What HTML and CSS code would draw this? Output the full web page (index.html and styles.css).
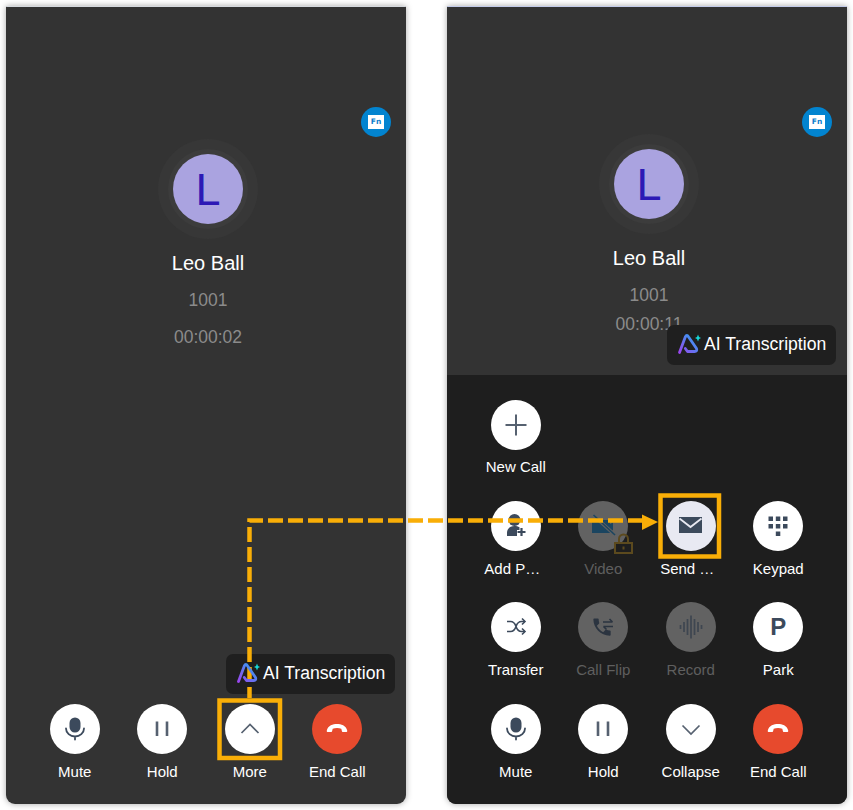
FILE: index.html
```html
<!DOCTYPE html>
<html lang="en">
<head>
<meta charset="utf-8">
<title>Call screen</title>
<link rel="stylesheet" href="styles.css">
</head>
<body>
<svg width="0" height="0" class="defs">
  <defs>
    <linearGradient id="ai-grad" x1="0" y1="1" x2="1" y2="0">
      <stop offset="0" stop-color="#9a46ee"/>
      <stop offset="1" stop-color="#2aa6f2"/>
    </linearGradient>
    <symbol id="i-mic" viewBox="0 0 50 50">
      <rect x="19.500" y="13.500" width="11" height="15" rx="5.500" fill="currentColor"/>
      <path d="M16 24.500a9 8 0 0 0 18 0M25 32.500v3" fill="none" stroke="currentColor" stroke-width="1.800" stroke-linecap="round"/>
    </symbol>
    <symbol id="i-pause" viewBox="0 0 50 50">
      <path d="M20 17.500v14.500M30 17.500v14.500" fill="none" stroke="#566170" stroke-width="2.600"/>
    </symbol>
    <symbol id="i-end" viewBox="0 0 50 50">
      <path d="M16 28c-.8 0-1.500-.7-1.200-1.600C16 21.500 21 20 25 20s9 1.500 10.200 6.400c.3.900-.4 1.600-1.200 1.600h-3c-.8 0-1-.6-1.200-1.300l-.5-1.900c-2.500-1-6-1-8.600 0l-.5 1.900c-.2.700-.4 1.300-1.200 1.300z" fill="currentColor"/>
    </symbol>
    <symbol id="i-ai" viewBox="0 0 24 22">
      <path d="M2.500 19.500L8.300 4Q9.800 1 11.600 4L19.500 15.500Q20.500 18.500 17.500 18.500H10.500L8.300 15.500" fill="none" stroke="url(#ai-grad)" stroke-width="2.800" stroke-linecap="round" stroke-linejoin="round"/>
      <path d="M21 1.500l1 2.500 2 1-2 1-1 2.500-1-2.500-2-1 2-1z" fill="#16d8d8"/>
    </symbol>
  </defs>
</svg>

<main class="stage">
  <section class="panel panel-collapsed">
    <div class="info info-collapsed">
      <div class="rings"><div class="ring-inner"><div class="avatar">L</div></div></div>
      <div class="name">Leo Ball</div>
      <div class="meta">1001</div>
      <div class="meta">00:00:02</div>
    </div>
    <div class="badge"><span class="badge-card">Fn</span></div>
    <div class="ai-tip ai-tip-low">
      <svg class="ai-icon"><use href="#i-ai"/></svg>
      <span>AI Transcription</span>
    </div>
    <div class="tiles">
      <div class="tile"><span class="circle"><svg class="icon"><use href="#i-mic"/></svg></span><span class="label">Mute</span></div>
      <div class="tile"><span class="circle"><svg class="icon"><use href="#i-pause"/></svg></span><span class="label">Hold</span></div>
      <div class="tile"><span class="circle"><svg class="icon" viewBox="0 0 50 50"><path d="M16.500 29L25 20.500 33.500 29" fill="none" stroke="#566170" stroke-width="1.700"/></svg></span><span class="label">More</span></div>
      <div class="tile"><span class="circle circle-end"><svg class="icon"><use href="#i-end"/></svg></span><span class="label">End Call</span></div>
    </div>
  </section>

  <section class="panel panel-expanded">
    <div class="info info-expanded">
      <div class="rings"><div class="ring-inner"><div class="avatar">L</div></div></div>
      <div class="name">Leo Ball</div>
      <div class="meta">1001</div>
      <div class="meta meta-tight">00:00:11</div>
    </div>
    <div class="badge"><span class="badge-card">Fn</span></div>
    <div class="ai-tip ai-tip-high">
      <svg class="ai-icon"><use href="#i-ai"/></svg>
      <span>AI Transcription</span>
    </div>
    <div class="tiles tiles-dark">
      <div class="tile tile-tight"><span class="circle"><svg class="icon" viewBox="0 0 50 50"><path d="M14.500 25h21M25 14.500v21" fill="none" stroke="#566170" stroke-width="2"/></svg></span><span class="label">New Call</span></div>
      <div class="tile row-start"><span class="circle"><svg class="icon" viewBox="0 0 50 50"><circle cx="23.500" cy="19" r="6" fill="currentColor"/><path d="M16 35v-3.500c0-4 3.500-6.500 7.500-6.500 2 0 3.500.4 5 1.300V29h-2.500v6z" fill="currentColor"/><path d="M30.500 27v8M26.500 31h8" fill="none" stroke="currentColor" stroke-width="2.200"/></svg></span><span class="label label-cut">Add P…</span></div>
      <div class="tile"><span class="circle circle-off"><svg class="icon" viewBox="0 0 50 50"><path d="M14 19h17l1 1v3l3-1.500v8L32 29v3H14z" fill="#1b4560"/><path d="M15 14l22 20" stroke="#626262" stroke-width="3.500"/><path d="M15.500 14l21.500 20" stroke="#1b4560" stroke-width="1.600"/></svg><svg class="lock" viewBox="0 0 19 21"><path d="M5 10V6a4.500 4.500 0 0 1 9 0v4" fill="none" stroke="#5c4a1e" stroke-width="2"/><rect x="1" y="10" width="17" height="10" fill="#1e1e1e" stroke="#5c4a1e" stroke-width="2"/><rect x="8.500" y="13.500" width="2" height="3" fill="#5c4a1e"/></svg></span><span class="label label-off">Video</span></div>
      <div class="tile"><span class="circle circle-active"><svg class="icon" viewBox="0 0 50 50"><path d="M13 16h23v16H13z" fill="currentColor"/><path d="M13.500 17.500L24.500 26l11-8.500" fill="none" stroke="#e8e9f2" stroke-width="1.800"/></svg></span><span class="label label-cut">Send …</span></div>
      <div class="tile"><span class="circle"><svg class="icon" viewBox="0 0 50 50"><path d="M15.500 15.500h4.500V20h-4.500zM22.800 15.500h4.500V20h-4.500zM30 15.500h4.500V20H30zM15.500 23h4.500v4.500h-4.500zM22.800 23h4.500v4.500h-4.500zM30 23h4.500v4.500H30zM22.800 30.500h4.500V35h-4.500z" fill="currentColor"/></svg></span><span class="label">Keypad</span></div>

      <div class="tile"><span class="circle"><svg class="icon" viewBox="0 0 50 50"><path d="M16 19.500h3.500c3.500 0 4.500 2 5.500 5s2 5 5.500 5H34M16 29.500h3.500c3.500 0 4.500-2 5.500-5s2-5 5.500-5H34" fill="none" stroke="currentColor" stroke-width="1.600"/><path d="M31 16.500l3 3-3 3M31 26.500l3 3-3 3" fill="none" stroke="currentColor" stroke-width="1.600"/></svg></span><span class="label">Transfer</span></div>
      <div class="tile"><span class="circle circle-off"><svg class="icon" viewBox="0 0 50 50"><g transform="translate(12.500 13.500) scale(.96)"><path d="M6.620 10.790c1.440 2.830 3.760 5.140 6.590 6.590l2.200-2.200c.27-.27.67-.36 1.020-.24 1.120.37 2.330.57 3.570.57.55 0 1 .45 1 1V20c0 .55-.45 1-1 1-9.390 0-17-7.610-17-17 0-.55.45-1 1-1h3.500c.55 0 1 .45 1 1 0 1.250.2 2.450.57 3.570.11.35.03.74-.25 1.020l-2.200 2.200z" fill="#2b3440"/></g><path d="M25 20h9.500M31.500 17l3 3M35 24.500h-9.500M28.500 27.500l-3-3" fill="none" stroke="#2b3440" stroke-width="1.600"/></svg></span><span class="label label-off">Call Flip</span></div>
      <div class="tile"><span class="circle circle-off"><svg class="icon" viewBox="0 0 50 50"><path d="M14.500 23v4M18 20v10M21.500 17v16M25 13.500v23M28.500 17v16M32 20v10M35.500 23v4" fill="none" stroke="#3e4650" stroke-width="1.700"/></svg></span><span class="label label-off">Record</span></div>
      <div class="tile"><span class="circle circle-text">P</span><span class="label">Park</span></div>

      <div class="tile"><span class="circle"><svg class="icon"><use href="#i-mic"/></svg></span><span class="label">Mute</span></div>
      <div class="tile"><span class="circle"><svg class="icon"><use href="#i-pause"/></svg></span><span class="label">Hold</span></div>
      <div class="tile"><span class="circle"><svg class="icon" viewBox="0 0 50 50"><path d="M16.500 21.500L25 30l8.500-8.500" fill="none" stroke="#566170" stroke-width="1.700"/></svg></span><span class="label">Collapse</span></div>
      <div class="tile"><span class="circle circle-end"><svg class="icon"><use href="#i-end"/></svg></span><span class="label">End Call</span></div>
    </div>
  </section>
</main>

<svg class="annotations" width="853" height="810" viewBox="0 0 853 810">
  <g fill="none" stroke="#f9ae07">
    <path class="dash" d="M249.500 698V520.500H645"/>
    <rect x="219.500" y="700.500" width="60.500" height="57.500" stroke-width="4.500"/>
    <rect x="660.500" y="495.500" width="58.500" height="61" stroke-width="4.500"/>
  </g>
  <path d="M642 514.500L658 522 642 530z" fill="#f9ae07"/>
</svg>
</body>
</html>
```

FILE: styles.css
```css
* {
  box-sizing: border-box;
}

html,
body {
  margin: 0;
  padding: 0;
  background: #fff;
}

body {
  position: relative;
  width: 853px;
  height: 810px;
  overflow: hidden;
  font-family: "Liberation Sans", Arial, sans-serif;
}

.defs {
  position: absolute;
}

.stage {
  display: flex;
  gap: 41px;
  padding: 6px 6px 0;
}

.panel {
  position: relative;
  display: flex;
  flex-direction: column;
  justify-content: space-between;
  width: 400px;
  height: 798px;
  background: #333;
  border-top: 1px solid #d5d9de;
  border-radius: 1px 1px 9px 9px;
  box-shadow: 0 0 6px rgba(0, 0, 0, 0.35);
}

.panel-expanded {
  border-top-color: #c3cbea;
}

.info {
  display: flex;
  flex-direction: column;
  align-items: center;
  gap: 10px;
  padding-left: 4px;
}

.info-collapsed {
  padding-top: 132px;
}

.info-expanded {
  padding-top: 127px;
}

.rings {
  display: flex;
  align-items: center;
  justify-content: center;
  width: 100px;
  height: 100px;
  margin-bottom: 1px;
  border-radius: 50%;
  background: #373737;
}

.ring-inner {
  display: flex;
  align-items: center;
  justify-content: center;
  width: 80px;
  height: 80px;
  border-radius: 50%;
  background: #3c3c3c;
}

.avatar {
  display: flex;
  align-items: center;
  justify-content: center;
  width: 70px;
  height: 70px;
  border-radius: 50%;
  background: #aaa3e0;
  color: #2c19b5;
  font-size: 45px;
  line-height: 1;
}

.name {
  color: #fff;
  font-size: 20px;
  line-height: 27px;
}

.meta {
  color: #8b8b8b;
  font-size: 17.500px;
  line-height: 27px;
}

.meta-tight {
  margin-top: -8px;
}

.badge {
  position: absolute;
  top: 100px;
  right: 15px;
  display: flex;
  align-items: center;
  justify-content: center;
  width: 30px;
  height: 30px;
  border-radius: 50%;
  background: #0284d0;
}

.badge-card {
  display: flex;
  align-items: center;
  justify-content: center;
  width: 16px;
  height: 14px;
  background: #fff;
  color: #0c7fcc;
  font-family: "DejaVu Sans", sans-serif;
  font-size: 7.500px;
  font-weight: 700;
  line-height: 1;
}

.ai-tip {
  position: absolute;
  right: 11px;
  display: flex;
  align-items: center;
  gap: 3px;
  width: 169px;
  height: 40px;
  padding: 0 0 2px 10px;
  border-radius: 7px;
  background: #1f1f1f;
  color: #fff;
  font-size: 17.600px;
  white-space: nowrap;
}

.ai-tip-low {
  top: 647px;
}

.ai-tip-high {
  top: 318px;
}

.ai-icon {
  position: relative;
  z-index: 2;
  width: 24px;
  height: 22px;
  flex: none;
}

.tiles {
  display: grid;
  grid-template-columns: repeat(4, 1fr);
  align-content: start;
  row-gap: 23.200px;
  padding: 25px 25px 22px;
  border-radius: 0 0 9px 9px;
}

.tiles-dark {
  height: 429px;
  background: #1e1e1e;
}

.row-start {
  grid-column: 1;
}

.tile {
  display: flex;
  flex-direction: column;
  align-items: center;
  gap: 8px;
}

.tile-tight {
  gap: 7px;
  padding-bottom: 1px;
}

.circle {
  position: relative;
  display: block;
  width: 50px;
  height: 50px;
  border-radius: 50%;
  background: #fff;
  color: #3c4a5c;
}

.circle-end {
  background: #e74a2d;
  color: #fff;
}

.circle-off {
  background: #626262;
}

.circle-active {
  background: #e8e9f2;
}

.circle-text {
  display: flex;
  align-items: center;
  justify-content: center;
  font-size: 24px;
  font-weight: 700;
}

.icon {
  display: block;
  width: 50px;
  height: 50px;
}

.lock {
  position: absolute;
  left: 36px;
  top: 32px;
  width: 19px;
  height: 21px;
}

.label {
  color: #fff;
  font-size: 15px;
  line-height: 20px;
  text-align: center;
  white-space: nowrap;
}

.label-cut {
  margin-right: 7px;
}

.label-off {
  color: #5f5f5f;
}

.annotations {
  position: absolute;
  top: 0;
  left: 0;
  z-index: 1;
  pointer-events: none;
}

.dash {
  stroke-width: 4.500;
  stroke-dasharray: 15 5;
  stroke-dashoffset: 4;
}
```
